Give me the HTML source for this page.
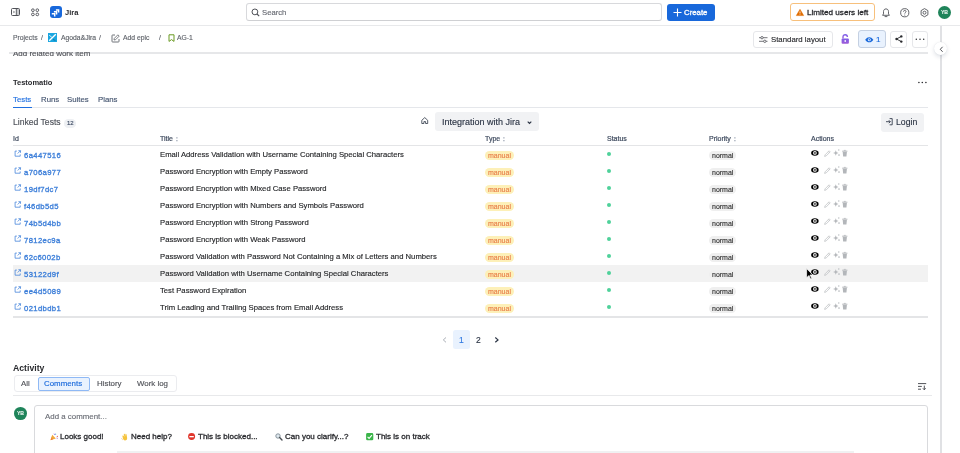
<!DOCTYPE html>
<html><head><meta charset="utf-8">
<style>
*{box-sizing:border-box;margin:0;padding:0}
html,body{width:960px;height:453px;overflow:hidden;background:#fff;font-family:"Liberation Sans",sans-serif;color:#292a2e}
.a{position:absolute;white-space:nowrap}
.t{position:absolute;white-space:nowrap;line-height:1;will-change:transform}
svg{position:absolute;display:block;overflow:visible}
</style></head><body>
<div class="a" style="left:0px;top:25px;width:960px;height:1px;background:#e8e9eb"></div>
<svg style="left:11px;top:8px" width="9" height="8" viewBox="0 0 9 8"><rect x=".5" y=".5" width="8" height="7" rx="1" fill="none" stroke="#505258" stroke-width="1"/><rect x="5.3" y="1" width="2.7" height="6" fill="#c9cacd"/><path d="M5.3 .5v7" stroke="#505258" stroke-width=".9"/><path d="M2.4 2.9l1 1.1-1 1.1" fill="none" stroke="#505258" stroke-width=".8"/></svg>
<svg style="left:30.5px;top:8px" width="9" height="9" viewBox="0 0 9 9"><circle cx="1.9" cy="2.2" r="1.35" fill="none" stroke="#505258" stroke-width=".95"/><circle cx="1.9" cy="6.4" r="1.35" fill="none" stroke="#505258" stroke-width=".95"/><circle cx="6.3" cy="2.2" r="1.35" fill="none" stroke="#505258" stroke-width=".95"/><circle cx="6.3" cy="6.4" r="1.35" fill="none" stroke="#505258" stroke-width=".95"/></svg>
<div class="a" style="left:49.9px;top:6.1px;width:12.1px;height:12px;border-radius:3px;background:#1868db"></div>
<svg style="left:49px;top:5px" width="14" height="14" viewBox="0 0 14 14"><g fill="none" stroke="#fff" stroke-width="1.45" stroke-linejoin="miter"><path d="M6.9 4.9H9.6V7.5"/><path d="M4.9 6.8H7.6V9.4"/><path d="M2.8 8.8H5.7V11.6"/></g></svg>
<div class="t" style="left:65.10px;top:9.00px;font-size:7.5px;font-weight:bold;color:#292a2e;">Jira</div>
<div class="a" style="left:246px;top:3.2px;width:416.2px;height:17.4px;border:1px solid #d8d9dc;border-bottom-color:#cfd0d3;border-radius:3px"></div>
<svg style="left:250.5px;top:7.5px" width="9" height="9" viewBox="0 0 9 9"><circle cx="3.9" cy="3.9" r="2.9" fill="none" stroke="#505258" stroke-width="1"/><path d="M6 6l2.2 2.2" stroke="#505258" stroke-width="1.1"/></svg>
<div class="t" style="left:262.30px;top:9.00px;font-size:7.7px;-webkit-text-stroke:.14px #676a72;color:#676a72;">Search</div>
<div class="a" style="left:666.5px;top:4px;width:48.5px;height:16.5px;border-radius:3px;background:#1868db"></div>
<svg style="left:673px;top:8px" width="9" height="9" viewBox="0 0 9 9"><path d="M4.5 .5v8M.5 4.5h8" stroke="#fff" stroke-width="1.1"/></svg>
<div class="t" style="left:684.40px;top:9.00px;font-size:7.8px;color:#fff;-webkit-text-stroke:.3px #fff">Create</div>
<div class="a" style="left:789.5px;top:3px;width:85px;height:17.5px;border:1px solid #f7c07c;border-radius:3px"></div>
<svg style="left:795.5px;top:8.8px" width="8" height="7" viewBox="0 0 8 7"><path d="M4 .3L7.7 6.6H.3z" fill="#e06c00" stroke="#e06c00" stroke-width=".5" stroke-linejoin="round"/><path d="M4 2.4v2.1" stroke="#fff" stroke-width=".8"/><circle cx="4" cy="5.5" r=".42" fill="#fff"/></svg>
<div class="t" style="left:806.70px;top:9.00px;font-size:8.1px;color:#292a2e;-webkit-text-stroke:.3px #292a2e">Limited users left</div>
<svg style="left:881.5px;top:7.5px" width="8" height="9.5" viewBox="0 0 8 9.5"><path d="M4 .9C2.5.9 1.5 2 1.5 3.6v2.3L.6 7.3h6.8l-.9-1.4V3.6C6.5 2 5.5.9 4 .9z" fill="none" stroke="#505258" stroke-width=".9" stroke-linejoin="round"/><path d="M3 8.6h2" stroke="#505258" stroke-width=".9" stroke-linecap="round"/></svg>
<svg style="left:900px;top:7.6px" width="9.5" height="9.5" viewBox="0 0 9.5 9.5"><circle cx="4.75" cy="4.75" r="4.1" fill="none" stroke="#505258" stroke-width=".9"/><path d="M3.5 3.7c0-.8.5-1.3 1.25-1.3S6 2.9 6 3.6c0 1-1.25 1-1.25 2" fill="none" stroke="#505258" stroke-width=".85"/><circle cx="4.75" cy="7.1" r=".5" fill="#505258"/></svg>
<svg style="left:919.6px;top:7.6px" width="9" height="9.4" viewBox="0 0 9 9.4"><path d="M4.5 .6l3.4 2v4.2l-3.4 2-3.4-2V2.6z" fill="none" stroke="#505258" stroke-width=".9" stroke-linejoin="round"/><circle cx="4.5" cy="4.7" r="1.5" fill="none" stroke="#505258" stroke-width=".9"/></svg>
<div class="a" style="left:937.8px;top:5.8px;width:13px;height:13px;border-radius:50%;background:#1f845a"></div>
<div class="t" style="left:937.8px;top:9.6px;width:13px;text-align:center;font-size:5.2px;font-weight:bold;color:#fff;letter-spacing:-.1px">YB</div>
<div class="a" style="left:940.4px;top:26px;width:1.5px;height:427px;background:#e0e1e4"></div>
<div class="a" style="left:9px;top:52.3px;width:919px;height:1.6px;background:#e6e7e9"></div>
<div class="a" style="left:0;top:51.5px;width:928px;height:6px;overflow:hidden">
<div class="t" style="left:12.70px;top:-1.50px;font-size:8px;-webkit-text-stroke:.14px #505258;color:#505258;">Add related work item</div>
</div>
<div class="t" style="left:12.80px;top:35.00px;font-size:6.8px;-webkit-text-stroke:.14px #5f636a;color:#5f636a;">Projects</div>
<div class="t" style="left:40.60px;top:35.00px;font-size:6.8px;-webkit-text-stroke:.14px #5f636a;color:#5f636a;">/</div>
<div class="a" style="left:48px;top:33.4px;width:8.9px;height:8.9px;background:#1aa6e0"></div>
<svg style="left:48px;top:33.4px" width="9" height="9" viewBox="0 0 9 9"><path d="M1.2 7.8L7.8 1.2" stroke="#fff" stroke-width="1.3"/><path d="M1.2 2.2l2.6 2" stroke="#d9f1fb" stroke-width="1"/><path d="M5 6.5l2.4 1" stroke="#0b6e9a" stroke-width=".8"/></svg>
<div class="t" style="left:60.95px;top:35.00px;font-size:6.8px;-webkit-text-stroke:.14px #5f636a;color:#5f636a;">Agoda&amp;Jira</div>
<div class="t" style="left:98.90px;top:35.00px;font-size:6.8px;-webkit-text-stroke:.14px #5f636a;color:#5f636a;">/</div>
<svg style="left:111px;top:33.5px" width="9" height="8.5" viewBox="0 0 9 8.5"><path d="M4 1H1.6C1.2 1 1 1.2 1 1.6v5.8c0 .4.2.6.6.6h5.8c.4 0 .6-.2.6-.6V5" fill="none" stroke="#5f636a" stroke-width=".9"/><path d="M6.9.8l1.3 1.3L4.6 5.7l-1.6.3.3-1.6z" fill="none" stroke="#5f636a" stroke-width=".8" stroke-linejoin="round"/></svg>
<div class="t" style="left:122.60px;top:35.00px;font-size:6.8px;-webkit-text-stroke:.14px #5f636a;color:#5f636a;">Add epic</div>
<div class="t" style="left:159.10px;top:35.00px;font-size:6.8px;-webkit-text-stroke:.14px #5f636a;color:#5f636a;">/</div>
<svg style="left:167.5px;top:34px" width="7" height="8" viewBox="0 0 7 8"><path d="M1 .8h5v6.6L3.5 5.6 1 7.4z" fill="none" stroke="#6a9a23" stroke-width="1" stroke-linejoin="round"/></svg>
<div class="t" style="left:177.40px;top:35.00px;font-size:6.8px;-webkit-text-stroke:.14px #5f636a;color:#5f636a;">AG-1</div>
<div class="a" style="left:752.6px;top:30.6px;width:80px;height:17.1px;border:1px solid #e6e7ea;border-radius:3px"></div>
<svg style="left:758.9px;top:36px" width="9" height="7" viewBox="0 0 9 7"><path d="M0 1.7h8.5M0 5.3h8.5" stroke="#505258" stroke-width=".8"/><circle cx="3" cy="1.7" r="1.2" fill="#fff" stroke="#505258" stroke-width=".8"/><circle cx="5.8" cy="5.3" r="1.2" fill="#fff" stroke="#505258" stroke-width=".8"/></svg>
<div class="t" style="left:770.50px;top:36.00px;font-size:7.8px;-webkit-text-stroke:.14px #292a2e;color:#292a2e;">Standard layout</div>
<svg style="left:840.7px;top:34px" width="8.5" height="10" viewBox="0 0 8.5 10"><defs><linearGradient id="lg" x1="0" y1="0" x2="0" y2="1"><stop offset="0" stop-color="#7d5fe8"/><stop offset="1" stop-color="#a05cd8"/></linearGradient></defs><path d="M2 4.6V3C2 1.6 3 .7 4.2.7S6.4 1.6 6.4 3" fill="none" stroke="url(#lg)" stroke-width="1.4"/><rect x=".6" y="4.4" width="7.3" height="5.4" rx="1" fill="url(#lg)"/><rect x="3.5" y="6.2" width="1.5" height="1.6" fill="#fff"/></svg>
<div class="a" style="left:858.1px;top:30.3px;width:28.2px;height:17.3px;border:1px solid #c4d0e2;border-radius:3px;background:#e9f2fe"></div>
<svg style="left:864.7px;top:36.5px" width="8.5" height="5.5" viewBox="0 0 8.5 5.5"><path d="M.2 2.75C1.4 1 2.7.2 4.25.2S7.1 1 8.3 2.75C7.1 4.5 5.8 5.3 4.25 5.3S1.4 4.5.2 2.75z" fill="#1868db"/><circle cx="4.25" cy="2.75" r="1.5" fill="#e9f2fe"/><circle cx="4.25" cy="2.75" r=".75" fill="#1868db"/></svg>
<div class="t" style="left:876.00px;top:36.00px;font-size:8.0px;-webkit-text-stroke:.14px #1868db;color:#1868db;">1</div>
<div class="a" style="left:890.2px;top:30.5px;width:16.5px;height:17.1px;border:1px solid #e6e7ea;border-radius:3px"></div>
<svg style="left:894.5px;top:35px" width="8" height="8" viewBox="0 0 8 8"><circle cx="6.3" cy="1.4" r="1.2" fill="#292a2e"/><circle cx="1.5" cy="4" r="1.2" fill="#292a2e"/><circle cx="6.3" cy="6.6" r="1.2" fill="#292a2e"/><path d="M6.3 1.4L1.5 4l4.8 2.6" fill="none" stroke="#292a2e" stroke-width=".9"/></svg>
<div class="a" style="left:911.6px;top:30.5px;width:16.8px;height:17.1px;border:1px solid #e6e7ea;border-radius:3px"></div>
<svg style="left:914.5px;top:38px" width="10" height="2.5" viewBox="0 0 10 2.5"><circle cx="1.3" cy="1.2" r=".75" fill="#292a2e"/><circle cx="5" cy="1.2" r=".75" fill="#292a2e"/><circle cx="8.7" cy="1.2" r=".75" fill="#292a2e"/></svg>
<div class="a" style="left:934px;top:41.8px;width:13.4px;height:13.4px;border-radius:50%;background:#fff;box-shadow:0 2px 4px rgba(9,30,66,.13),0 0 1px rgba(9,30,66,.12)"></div>
<svg style="left:938.5px;top:45.5px" width="5" height="7" viewBox="0 0 5 7"><path d="M3.6 .8L1.3 3.3 3.6 5.8" fill="none" stroke="#505258" stroke-width="1"/></svg>
<div class="t" style="left:13.45px;top:79.00px;font-size:7.5px;font-weight:bold;color:#292a2e;">Testomatio</div>
<svg style="left:916.5px;top:80.6px" width="11" height="3" viewBox="0 0 11 3"><circle cx="1.9" cy="1.5" r=".8" fill="#292a2e"/><circle cx="5.3" cy="1.5" r=".8" fill="#292a2e"/><circle cx="8.9" cy="1.5" r=".8" fill="#292a2e"/></svg>
<div class="t" style="left:13.10px;top:96.00px;font-size:7.8px;-webkit-text-stroke:.14px #1f6fe0;color:#1f6fe0;">Tests</div>
<div class="t" style="left:40.70px;top:96.00px;font-size:7.8px;-webkit-text-stroke:.14px #44546f;color:#44546f;">Runs</div>
<div class="t" style="left:67.00px;top:96.00px;font-size:7.8px;-webkit-text-stroke:.14px #44546f;color:#44546f;">Suites</div>
<div class="t" style="left:97.70px;top:96.00px;font-size:7.8px;-webkit-text-stroke:.14px #44546f;color:#44546f;">Plans</div>
<div class="a" style="left:13px;top:107px;width:915px;height:1px;background:#e5e7eb"></div>
<div class="a" style="left:13.4px;top:106.5px;width:18.8px;height:1.6px;background:#1f6fe0"></div>
<div class="t" style="left:12.90px;top:118.00px;font-size:8.6px;-webkit-text-stroke:.14px #4b4f57;color:#4b4f57;">Linked Tests</div>
<div class="a" style="left:63.8px;top:119px;width:12px;height:8.5px;border-radius:4.25px;background:#eef0f3"></div>
<div class="t" style="left:66.70px;top:120.00px;font-size:6px;-webkit-text-stroke:.14px #3d4a63;color:#3d4a63;">12</div>
<svg style="left:421px;top:117.4px" width="8" height="7" viewBox="0 0 8 7"><path d="M.8 3.3L3.75.6l2.95 2.7V6.5H4.6V4.6H2.9v1.9H.8z" fill="none" stroke="#2b3444" stroke-width=".8" stroke-linejoin="round"/></svg>
<div class="a" style="left:435.3px;top:112.4px;width:103.3px;height:19px;border-radius:3px;background:#f1f2f4"></div>
<div class="t" style="left:441.50px;top:118.00px;font-size:9px;-webkit-text-stroke:.14px #2b3444;color:#2b3444;">Integration with Jira</div>
<svg style="left:526.5px;top:121px" width="5" height="3.5" viewBox="0 0 5 3.5"><path d="M.7.7l1.8 1.8L4.3.7" fill="none" stroke="#2b3444" stroke-width="1.1"/></svg>
<div class="a" style="left:881.2px;top:112.9px;width:42.6px;height:18.8px;border-radius:3px;background:#f1f2f4"></div>
<svg style="left:886px;top:118.3px" width="7" height="7.5" viewBox="0 0 7 7.5"><path d="M3.6.6H6.2v6.2H3.6" fill="none" stroke="#2b3444" stroke-width=".85"/><path d="M0 3.7h4.3M2.8 2.2l1.5 1.5-1.5 1.5" fill="none" stroke="#2b3444" stroke-width=".85"/></svg>
<div class="t" style="left:896.00px;top:118.00px;font-size:8.7px;-webkit-text-stroke:.14px #2b3444;color:#2b3444;">Login</div>
<div class="t" style="left:12.90px;top:135.00px;font-size:7.0px;color:#3e4a5e;-webkit-text-stroke:.2px #3e4a5e">Id</div>
<div class="t" style="left:159.70px;top:135.00px;font-size:7.0px;color:#3e4a5e;-webkit-text-stroke:.2px #3e4a5e">Title</div>
<div class="t" style="left:485.10px;top:135.00px;font-size:7.0px;color:#3e4a5e;-webkit-text-stroke:.2px #3e4a5e">Type</div>
<div class="t" style="left:607.00px;top:135.00px;font-size:7.0px;color:#3e4a5e;-webkit-text-stroke:.2px #3e4a5e">Status</div>
<div class="t" style="left:708.70px;top:135.00px;font-size:7.0px;color:#3e4a5e;-webkit-text-stroke:.2px #3e4a5e">Priority</div>
<div class="t" style="left:810.50px;top:135.00px;font-size:7.0px;color:#3e4a5e;-webkit-text-stroke:.2px #3e4a5e">Actions</div>
<svg style="left:176.2px;top:137.1px" width="2" height="4.5" viewBox="0 0 2 4.5"><rect x=".3" y=".2" width="1.2" height="1.3" fill="#9aa3b2"/><rect x=".3" y="3" width="1.2" height="1.3" fill="#9aa3b2"/></svg>
<svg style="left:502.6px;top:137.1px" width="2" height="4.5" viewBox="0 0 2 4.5"><rect x=".3" y=".2" width="1.2" height="1.3" fill="#9aa3b2"/><rect x=".3" y="3" width="1.2" height="1.3" fill="#9aa3b2"/></svg>
<svg style="left:733.9px;top:137.1px" width="2" height="4.5" viewBox="0 0 2 4.5"><rect x=".3" y=".2" width="1.2" height="1.3" fill="#9aa3b2"/><rect x=".3" y="3" width="1.2" height="1.3" fill="#9aa3b2"/></svg>
<div class="a" style="left:13px;top:144.5px;width:915px;height:1.5px;background:#e4e5e7"></div>
<svg style="left:13.8px;top:149.8px" width="7.5" height="7" viewBox="0 0 7.5 7"><path d="M2.9 1.1H1.1v5.1h5.1V4.4" fill="none" stroke="#3d7fd9" stroke-width=".75"/><path d="M4.4.7h2.1v2.1M6.5.7L3.7 3.5" fill="none" stroke="#3d7fd9" stroke-width=".75"/></svg>
<div class="t" style="left:23.70px;top:152.00px;font-size:7.7px;color:#3d7fd9;letter-spacing:.35px;-webkit-text-stroke:.32px #3d7fd9">6a447516</div>
<div class="t" style="left:159.70px;top:151.00px;font-size:7.7px;-webkit-text-stroke:.14px #1f2023;color:#1f2023;">Email Address Validation with Username Containing Special Characters</div>
<div class="a" style="left:485.1px;top:150.7px;width:29.2px;height:9.2px;border-radius:4.6px;background:#fdf0b8"></div>
<div class="t" style="left:487.90px;top:152.00px;font-size:7px;-webkit-text-stroke:.14px #e8804a;color:#e8804a;">manual</div>
<div class="a" style="left:607.3px;top:152.1px;width:4px;height:4px;border-radius:50%;background:#4fd19a"></div>
<div class="a" style="left:709.4px;top:151.1px;width:26.4px;height:8.8px;border-radius:4.4px;background:#efefef"></div>
<div class="t" style="left:711.60px;top:152.00px;font-size:7px;-webkit-text-stroke:.14px #333;color:#333;">normal</div>
<svg style="left:810.8px;top:150.2px" width="8" height="6" viewBox="0 0 8 6"><ellipse cx="3.9" cy="2.9" rx="3.75" ry="2.75" fill="#000"/><circle cx="3.9" cy="2.9" r="1.85" fill="#fff"/><circle cx="3.9" cy="2.9" r="1.05" fill="#555"/><circle cx="3.9" cy="2.9" r=".45" fill="#999"/></svg>
<svg style="left:824.3px;top:149.6px" width="7" height="7" viewBox="0 0 7 7"><path d="M5.1.8l1.1 1.1L2.2 5.9l-1.6.5.5-1.6z" fill="none" stroke="#c4c6c9" stroke-width=".85" stroke-linejoin="round"/><path d="M4.3 1.6l1.1 1.1" stroke="#c4c6c9" stroke-width=".7"/></svg>
<svg style="left:832.6px;top:149.4px" width="7" height="7" viewBox="0 0 7 7"><path d="M2.8 1.3l.75 1.95 1.95.75-1.95.75-.75 1.95-.75-1.95L.1 4l1.95-.75z" fill="#b3b6ba"/><circle cx="5.8" cy="1" r=".65" fill="#b3b6ba"/><circle cx="6" cy="6.1" r=".8" fill="#b3b6ba"/></svg>
<svg style="left:842px;top:149.6px" width="5.6" height="6.6" viewBox="0 0 5.6 6.6"><path d="M.2 1.2h5.2" stroke="#b3b6ba" stroke-width="1"/><path d="M1.8.4h2" stroke="#b3b6ba" stroke-width=".8"/><path d="M.7 1.9h4.2l-.45 4.5H1.15z" fill="#b3b6ba"/></svg>
<svg style="left:13.8px;top:166.8px" width="7.5" height="7" viewBox="0 0 7.5 7"><path d="M2.9 1.1H1.1v5.1h5.1V4.4" fill="none" stroke="#3d7fd9" stroke-width=".75"/><path d="M4.4.7h2.1v2.1M6.5.7L3.7 3.5" fill="none" stroke="#3d7fd9" stroke-width=".75"/></svg>
<div class="t" style="left:23.70px;top:169.00px;font-size:7.7px;color:#3d7fd9;letter-spacing:.35px;-webkit-text-stroke:.32px #3d7fd9">a706a977</div>
<div class="t" style="left:159.70px;top:168.00px;font-size:7.7px;-webkit-text-stroke:.14px #1f2023;color:#1f2023;">Password Encryption with Empty Password</div>
<div class="a" style="left:485.1px;top:167.7px;width:29.2px;height:9.2px;border-radius:4.6px;background:#fdf0b8"></div>
<div class="t" style="left:487.90px;top:169.00px;font-size:7px;-webkit-text-stroke:.14px #e8804a;color:#e8804a;">manual</div>
<div class="a" style="left:607.3px;top:169.1px;width:4px;height:4px;border-radius:50%;background:#4fd19a"></div>
<div class="a" style="left:709.4px;top:168.1px;width:26.4px;height:8.8px;border-radius:4.4px;background:#efefef"></div>
<div class="t" style="left:711.60px;top:169.00px;font-size:7px;-webkit-text-stroke:.14px #333;color:#333;">normal</div>
<svg style="left:810.8px;top:167.2px" width="8" height="6" viewBox="0 0 8 6"><ellipse cx="3.9" cy="2.9" rx="3.75" ry="2.75" fill="#000"/><circle cx="3.9" cy="2.9" r="1.85" fill="#fff"/><circle cx="3.9" cy="2.9" r="1.05" fill="#555"/><circle cx="3.9" cy="2.9" r=".45" fill="#999"/></svg>
<svg style="left:824.3px;top:166.6px" width="7" height="7" viewBox="0 0 7 7"><path d="M5.1.8l1.1 1.1L2.2 5.9l-1.6.5.5-1.6z" fill="none" stroke="#c4c6c9" stroke-width=".85" stroke-linejoin="round"/><path d="M4.3 1.6l1.1 1.1" stroke="#c4c6c9" stroke-width=".7"/></svg>
<svg style="left:832.6px;top:166.4px" width="7" height="7" viewBox="0 0 7 7"><path d="M2.8 1.3l.75 1.95 1.95.75-1.95.75-.75 1.95-.75-1.95L.1 4l1.95-.75z" fill="#b3b6ba"/><circle cx="5.8" cy="1" r=".65" fill="#b3b6ba"/><circle cx="6" cy="6.1" r=".8" fill="#b3b6ba"/></svg>
<svg style="left:842px;top:166.6px" width="5.6" height="6.6" viewBox="0 0 5.6 6.6"><path d="M.2 1.2h5.2" stroke="#b3b6ba" stroke-width="1"/><path d="M1.8.4h2" stroke="#b3b6ba" stroke-width=".8"/><path d="M.7 1.9h4.2l-.45 4.5H1.15z" fill="#b3b6ba"/></svg>
<svg style="left:13.8px;top:183.8px" width="7.5" height="7" viewBox="0 0 7.5 7"><path d="M2.9 1.1H1.1v5.1h5.1V4.4" fill="none" stroke="#3d7fd9" stroke-width=".75"/><path d="M4.4.7h2.1v2.1M6.5.7L3.7 3.5" fill="none" stroke="#3d7fd9" stroke-width=".75"/></svg>
<div class="t" style="left:23.70px;top:186.00px;font-size:7.7px;color:#3d7fd9;letter-spacing:.35px;-webkit-text-stroke:.32px #3d7fd9">19df7dc7</div>
<div class="t" style="left:159.70px;top:185.00px;font-size:7.7px;-webkit-text-stroke:.14px #1f2023;color:#1f2023;">Password Encryption with Mixed Case Password</div>
<div class="a" style="left:485.1px;top:184.7px;width:29.2px;height:9.2px;border-radius:4.6px;background:#fdf0b8"></div>
<div class="t" style="left:487.90px;top:186.00px;font-size:7px;-webkit-text-stroke:.14px #e8804a;color:#e8804a;">manual</div>
<div class="a" style="left:607.3px;top:186.1px;width:4px;height:4px;border-radius:50%;background:#4fd19a"></div>
<div class="a" style="left:709.4px;top:185.1px;width:26.4px;height:8.8px;border-radius:4.4px;background:#efefef"></div>
<div class="t" style="left:711.60px;top:186.00px;font-size:7px;-webkit-text-stroke:.14px #333;color:#333;">normal</div>
<svg style="left:810.8px;top:184.2px" width="8" height="6" viewBox="0 0 8 6"><ellipse cx="3.9" cy="2.9" rx="3.75" ry="2.75" fill="#000"/><circle cx="3.9" cy="2.9" r="1.85" fill="#fff"/><circle cx="3.9" cy="2.9" r="1.05" fill="#555"/><circle cx="3.9" cy="2.9" r=".45" fill="#999"/></svg>
<svg style="left:824.3px;top:183.6px" width="7" height="7" viewBox="0 0 7 7"><path d="M5.1.8l1.1 1.1L2.2 5.9l-1.6.5.5-1.6z" fill="none" stroke="#c4c6c9" stroke-width=".85" stroke-linejoin="round"/><path d="M4.3 1.6l1.1 1.1" stroke="#c4c6c9" stroke-width=".7"/></svg>
<svg style="left:832.6px;top:183.4px" width="7" height="7" viewBox="0 0 7 7"><path d="M2.8 1.3l.75 1.95 1.95.75-1.95.75-.75 1.95-.75-1.95L.1 4l1.95-.75z" fill="#b3b6ba"/><circle cx="5.8" cy="1" r=".65" fill="#b3b6ba"/><circle cx="6" cy="6.1" r=".8" fill="#b3b6ba"/></svg>
<svg style="left:842px;top:183.6px" width="5.6" height="6.6" viewBox="0 0 5.6 6.6"><path d="M.2 1.2h5.2" stroke="#b3b6ba" stroke-width="1"/><path d="M1.8.4h2" stroke="#b3b6ba" stroke-width=".8"/><path d="M.7 1.9h4.2l-.45 4.5H1.15z" fill="#b3b6ba"/></svg>
<svg style="left:13.8px;top:200.8px" width="7.5" height="7" viewBox="0 0 7.5 7"><path d="M2.9 1.1H1.1v5.1h5.1V4.4" fill="none" stroke="#3d7fd9" stroke-width=".75"/><path d="M4.4.7h2.1v2.1M6.5.7L3.7 3.5" fill="none" stroke="#3d7fd9" stroke-width=".75"/></svg>
<div class="t" style="left:23.70px;top:203.00px;font-size:7.7px;color:#3d7fd9;letter-spacing:.35px;-webkit-text-stroke:.32px #3d7fd9">f46db5d5</div>
<div class="t" style="left:159.70px;top:202.00px;font-size:7.7px;-webkit-text-stroke:.14px #1f2023;color:#1f2023;">Password Encryption with Numbers and Symbols Password</div>
<div class="a" style="left:485.1px;top:201.7px;width:29.2px;height:9.2px;border-radius:4.6px;background:#fdf0b8"></div>
<div class="t" style="left:487.90px;top:203.00px;font-size:7px;-webkit-text-stroke:.14px #e8804a;color:#e8804a;">manual</div>
<div class="a" style="left:607.3px;top:203.1px;width:4px;height:4px;border-radius:50%;background:#4fd19a"></div>
<div class="a" style="left:709.4px;top:202.1px;width:26.4px;height:8.8px;border-radius:4.4px;background:#efefef"></div>
<div class="t" style="left:711.60px;top:203.00px;font-size:7px;-webkit-text-stroke:.14px #333;color:#333;">normal</div>
<svg style="left:810.8px;top:201.2px" width="8" height="6" viewBox="0 0 8 6"><ellipse cx="3.9" cy="2.9" rx="3.75" ry="2.75" fill="#000"/><circle cx="3.9" cy="2.9" r="1.85" fill="#fff"/><circle cx="3.9" cy="2.9" r="1.05" fill="#555"/><circle cx="3.9" cy="2.9" r=".45" fill="#999"/></svg>
<svg style="left:824.3px;top:200.6px" width="7" height="7" viewBox="0 0 7 7"><path d="M5.1.8l1.1 1.1L2.2 5.9l-1.6.5.5-1.6z" fill="none" stroke="#c4c6c9" stroke-width=".85" stroke-linejoin="round"/><path d="M4.3 1.6l1.1 1.1" stroke="#c4c6c9" stroke-width=".7"/></svg>
<svg style="left:832.6px;top:200.4px" width="7" height="7" viewBox="0 0 7 7"><path d="M2.8 1.3l.75 1.95 1.95.75-1.95.75-.75 1.95-.75-1.95L.1 4l1.95-.75z" fill="#b3b6ba"/><circle cx="5.8" cy="1" r=".65" fill="#b3b6ba"/><circle cx="6" cy="6.1" r=".8" fill="#b3b6ba"/></svg>
<svg style="left:842px;top:200.6px" width="5.6" height="6.6" viewBox="0 0 5.6 6.6"><path d="M.2 1.2h5.2" stroke="#b3b6ba" stroke-width="1"/><path d="M1.8.4h2" stroke="#b3b6ba" stroke-width=".8"/><path d="M.7 1.9h4.2l-.45 4.5H1.15z" fill="#b3b6ba"/></svg>
<svg style="left:13.8px;top:217.8px" width="7.5" height="7" viewBox="0 0 7.5 7"><path d="M2.9 1.1H1.1v5.1h5.1V4.4" fill="none" stroke="#3d7fd9" stroke-width=".75"/><path d="M4.4.7h2.1v2.1M6.5.7L3.7 3.5" fill="none" stroke="#3d7fd9" stroke-width=".75"/></svg>
<div class="t" style="left:23.70px;top:220.00px;font-size:7.7px;color:#3d7fd9;letter-spacing:.35px;-webkit-text-stroke:.32px #3d7fd9">74b5d4bb</div>
<div class="t" style="left:159.70px;top:219.00px;font-size:7.7px;-webkit-text-stroke:.14px #1f2023;color:#1f2023;">Password Encryption with Strong Password</div>
<div class="a" style="left:485.1px;top:218.7px;width:29.2px;height:9.2px;border-radius:4.6px;background:#fdf0b8"></div>
<div class="t" style="left:487.90px;top:220.00px;font-size:7px;-webkit-text-stroke:.14px #e8804a;color:#e8804a;">manual</div>
<div class="a" style="left:607.3px;top:220.1px;width:4px;height:4px;border-radius:50%;background:#4fd19a"></div>
<div class="a" style="left:709.4px;top:219.1px;width:26.4px;height:8.8px;border-radius:4.4px;background:#efefef"></div>
<div class="t" style="left:711.60px;top:220.00px;font-size:7px;-webkit-text-stroke:.14px #333;color:#333;">normal</div>
<svg style="left:810.8px;top:218.2px" width="8" height="6" viewBox="0 0 8 6"><ellipse cx="3.9" cy="2.9" rx="3.75" ry="2.75" fill="#000"/><circle cx="3.9" cy="2.9" r="1.85" fill="#fff"/><circle cx="3.9" cy="2.9" r="1.05" fill="#555"/><circle cx="3.9" cy="2.9" r=".45" fill="#999"/></svg>
<svg style="left:824.3px;top:217.6px" width="7" height="7" viewBox="0 0 7 7"><path d="M5.1.8l1.1 1.1L2.2 5.9l-1.6.5.5-1.6z" fill="none" stroke="#c4c6c9" stroke-width=".85" stroke-linejoin="round"/><path d="M4.3 1.6l1.1 1.1" stroke="#c4c6c9" stroke-width=".7"/></svg>
<svg style="left:832.6px;top:217.4px" width="7" height="7" viewBox="0 0 7 7"><path d="M2.8 1.3l.75 1.95 1.95.75-1.95.75-.75 1.95-.75-1.95L.1 4l1.95-.75z" fill="#b3b6ba"/><circle cx="5.8" cy="1" r=".65" fill="#b3b6ba"/><circle cx="6" cy="6.1" r=".8" fill="#b3b6ba"/></svg>
<svg style="left:842px;top:217.6px" width="5.6" height="6.6" viewBox="0 0 5.6 6.6"><path d="M.2 1.2h5.2" stroke="#b3b6ba" stroke-width="1"/><path d="M1.8.4h2" stroke="#b3b6ba" stroke-width=".8"/><path d="M.7 1.9h4.2l-.45 4.5H1.15z" fill="#b3b6ba"/></svg>
<svg style="left:13.8px;top:234.8px" width="7.5" height="7" viewBox="0 0 7.5 7"><path d="M2.9 1.1H1.1v5.1h5.1V4.4" fill="none" stroke="#3d7fd9" stroke-width=".75"/><path d="M4.4.7h2.1v2.1M6.5.7L3.7 3.5" fill="none" stroke="#3d7fd9" stroke-width=".75"/></svg>
<div class="t" style="left:23.70px;top:237.00px;font-size:7.7px;color:#3d7fd9;letter-spacing:.35px;-webkit-text-stroke:.32px #3d7fd9">7812ec9a</div>
<div class="t" style="left:159.70px;top:236.00px;font-size:7.7px;-webkit-text-stroke:.14px #1f2023;color:#1f2023;">Password Encryption with Weak Password</div>
<div class="a" style="left:485.1px;top:235.7px;width:29.2px;height:9.2px;border-radius:4.6px;background:#fdf0b8"></div>
<div class="t" style="left:487.90px;top:237.00px;font-size:7px;-webkit-text-stroke:.14px #e8804a;color:#e8804a;">manual</div>
<div class="a" style="left:607.3px;top:237.1px;width:4px;height:4px;border-radius:50%;background:#4fd19a"></div>
<div class="a" style="left:709.4px;top:236.1px;width:26.4px;height:8.8px;border-radius:4.4px;background:#efefef"></div>
<div class="t" style="left:711.60px;top:237.00px;font-size:7px;-webkit-text-stroke:.14px #333;color:#333;">normal</div>
<svg style="left:810.8px;top:235.2px" width="8" height="6" viewBox="0 0 8 6"><ellipse cx="3.9" cy="2.9" rx="3.75" ry="2.75" fill="#000"/><circle cx="3.9" cy="2.9" r="1.85" fill="#fff"/><circle cx="3.9" cy="2.9" r="1.05" fill="#555"/><circle cx="3.9" cy="2.9" r=".45" fill="#999"/></svg>
<svg style="left:824.3px;top:234.6px" width="7" height="7" viewBox="0 0 7 7"><path d="M5.1.8l1.1 1.1L2.2 5.9l-1.6.5.5-1.6z" fill="none" stroke="#c4c6c9" stroke-width=".85" stroke-linejoin="round"/><path d="M4.3 1.6l1.1 1.1" stroke="#c4c6c9" stroke-width=".7"/></svg>
<svg style="left:832.6px;top:234.4px" width="7" height="7" viewBox="0 0 7 7"><path d="M2.8 1.3l.75 1.95 1.95.75-1.95.75-.75 1.95-.75-1.95L.1 4l1.95-.75z" fill="#b3b6ba"/><circle cx="5.8" cy="1" r=".65" fill="#b3b6ba"/><circle cx="6" cy="6.1" r=".8" fill="#b3b6ba"/></svg>
<svg style="left:842px;top:234.6px" width="5.6" height="6.6" viewBox="0 0 5.6 6.6"><path d="M.2 1.2h5.2" stroke="#b3b6ba" stroke-width="1"/><path d="M1.8.4h2" stroke="#b3b6ba" stroke-width=".8"/><path d="M.7 1.9h4.2l-.45 4.5H1.15z" fill="#b3b6ba"/></svg>
<svg style="left:13.8px;top:251.8px" width="7.5" height="7" viewBox="0 0 7.5 7"><path d="M2.9 1.1H1.1v5.1h5.1V4.4" fill="none" stroke="#3d7fd9" stroke-width=".75"/><path d="M4.4.7h2.1v2.1M6.5.7L3.7 3.5" fill="none" stroke="#3d7fd9" stroke-width=".75"/></svg>
<div class="t" style="left:23.70px;top:254.00px;font-size:7.7px;color:#3d7fd9;letter-spacing:.35px;-webkit-text-stroke:.32px #3d7fd9">62c6002b</div>
<div class="t" style="left:159.70px;top:253.00px;font-size:7.7px;-webkit-text-stroke:.14px #1f2023;color:#1f2023;">Password Validation with Password Not Containing a Mix of Letters and Numbers</div>
<div class="a" style="left:485.1px;top:252.7px;width:29.2px;height:9.2px;border-radius:4.6px;background:#fdf0b8"></div>
<div class="t" style="left:487.90px;top:254.00px;font-size:7px;-webkit-text-stroke:.14px #e8804a;color:#e8804a;">manual</div>
<div class="a" style="left:607.3px;top:254.1px;width:4px;height:4px;border-radius:50%;background:#4fd19a"></div>
<div class="a" style="left:709.4px;top:253.1px;width:26.4px;height:8.8px;border-radius:4.4px;background:#efefef"></div>
<div class="t" style="left:711.60px;top:254.00px;font-size:7px;-webkit-text-stroke:.14px #333;color:#333;">normal</div>
<svg style="left:810.8px;top:252.2px" width="8" height="6" viewBox="0 0 8 6"><ellipse cx="3.9" cy="2.9" rx="3.75" ry="2.75" fill="#000"/><circle cx="3.9" cy="2.9" r="1.85" fill="#fff"/><circle cx="3.9" cy="2.9" r="1.05" fill="#555"/><circle cx="3.9" cy="2.9" r=".45" fill="#999"/></svg>
<svg style="left:824.3px;top:251.6px" width="7" height="7" viewBox="0 0 7 7"><path d="M5.1.8l1.1 1.1L2.2 5.9l-1.6.5.5-1.6z" fill="none" stroke="#c4c6c9" stroke-width=".85" stroke-linejoin="round"/><path d="M4.3 1.6l1.1 1.1" stroke="#c4c6c9" stroke-width=".7"/></svg>
<svg style="left:832.6px;top:251.4px" width="7" height="7" viewBox="0 0 7 7"><path d="M2.8 1.3l.75 1.95 1.95.75-1.95.75-.75 1.95-.75-1.95L.1 4l1.95-.75z" fill="#b3b6ba"/><circle cx="5.8" cy="1" r=".65" fill="#b3b6ba"/><circle cx="6" cy="6.1" r=".8" fill="#b3b6ba"/></svg>
<svg style="left:842px;top:251.6px" width="5.6" height="6.6" viewBox="0 0 5.6 6.6"><path d="M.2 1.2h5.2" stroke="#b3b6ba" stroke-width="1"/><path d="M1.8.4h2" stroke="#b3b6ba" stroke-width=".8"/><path d="M.7 1.9h4.2l-.45 4.5H1.15z" fill="#b3b6ba"/></svg>
<div class="a" style="left:13px;top:265px;width:915px;height:17px;background:#f2f2f2"></div>
<svg style="left:13.8px;top:268.8px" width="7.5" height="7" viewBox="0 0 7.5 7"><path d="M2.9 1.1H1.1v5.1h5.1V4.4" fill="none" stroke="#3d7fd9" stroke-width=".75"/><path d="M4.4.7h2.1v2.1M6.5.7L3.7 3.5" fill="none" stroke="#3d7fd9" stroke-width=".75"/></svg>
<div class="t" style="left:23.70px;top:271.00px;font-size:7.7px;color:#3d7fd9;letter-spacing:.35px;-webkit-text-stroke:.32px #3d7fd9">53122d9f</div>
<div class="t" style="left:159.70px;top:270.00px;font-size:7.7px;-webkit-text-stroke:.14px #1f2023;color:#1f2023;">Password Validation with Username Containing Special Characters</div>
<div class="a" style="left:485.1px;top:269.7px;width:29.2px;height:9.2px;border-radius:4.6px;background:#fdf0b8"></div>
<div class="t" style="left:487.90px;top:271.00px;font-size:7px;-webkit-text-stroke:.14px #e8804a;color:#e8804a;">manual</div>
<div class="a" style="left:607.3px;top:271.1px;width:4px;height:4px;border-radius:50%;background:#4fd19a"></div>
<div class="a" style="left:709.4px;top:270.1px;width:26.4px;height:8.8px;border-radius:4.4px;background:#efefef"></div>
<div class="t" style="left:711.60px;top:271.00px;font-size:7px;-webkit-text-stroke:.14px #333;color:#333;">normal</div>
<svg style="left:810.8px;top:269.2px" width="8" height="6" viewBox="0 0 8 6"><ellipse cx="3.9" cy="2.9" rx="3.75" ry="2.75" fill="#000"/><circle cx="3.9" cy="2.9" r="1.85" fill="#fff"/><circle cx="3.9" cy="2.9" r="1.05" fill="#555"/><circle cx="3.9" cy="2.9" r=".45" fill="#999"/></svg>
<svg style="left:824.3px;top:268.6px" width="7" height="7" viewBox="0 0 7 7"><path d="M5.1.8l1.1 1.1L2.2 5.9l-1.6.5.5-1.6z" fill="none" stroke="#c4c6c9" stroke-width=".85" stroke-linejoin="round"/><path d="M4.3 1.6l1.1 1.1" stroke="#c4c6c9" stroke-width=".7"/></svg>
<svg style="left:832.6px;top:268.4px" width="7" height="7" viewBox="0 0 7 7"><path d="M2.8 1.3l.75 1.95 1.95.75-1.95.75-.75 1.95-.75-1.95L.1 4l1.95-.75z" fill="#b3b6ba"/><circle cx="5.8" cy="1" r=".65" fill="#b3b6ba"/><circle cx="6" cy="6.1" r=".8" fill="#b3b6ba"/></svg>
<svg style="left:842px;top:268.6px" width="5.6" height="6.6" viewBox="0 0 5.6 6.6"><path d="M.2 1.2h5.2" stroke="#b3b6ba" stroke-width="1"/><path d="M1.8.4h2" stroke="#b3b6ba" stroke-width=".8"/><path d="M.7 1.9h4.2l-.45 4.5H1.15z" fill="#b3b6ba"/></svg>
<svg style="left:13.8px;top:285.8px" width="7.5" height="7" viewBox="0 0 7.5 7"><path d="M2.9 1.1H1.1v5.1h5.1V4.4" fill="none" stroke="#3d7fd9" stroke-width=".75"/><path d="M4.4.7h2.1v2.1M6.5.7L3.7 3.5" fill="none" stroke="#3d7fd9" stroke-width=".75"/></svg>
<div class="t" style="left:23.70px;top:288.00px;font-size:7.7px;color:#3d7fd9;letter-spacing:.35px;-webkit-text-stroke:.32px #3d7fd9">ee4d5089</div>
<div class="t" style="left:159.70px;top:287.00px;font-size:7.7px;-webkit-text-stroke:.14px #1f2023;color:#1f2023;">Test Password Expiration</div>
<div class="a" style="left:485.1px;top:286.7px;width:29.2px;height:9.2px;border-radius:4.6px;background:#fdf0b8"></div>
<div class="t" style="left:487.90px;top:288.00px;font-size:7px;-webkit-text-stroke:.14px #e8804a;color:#e8804a;">manual</div>
<div class="a" style="left:607.3px;top:288.1px;width:4px;height:4px;border-radius:50%;background:#4fd19a"></div>
<div class="a" style="left:709.4px;top:287.1px;width:26.4px;height:8.8px;border-radius:4.4px;background:#efefef"></div>
<div class="t" style="left:711.60px;top:288.00px;font-size:7px;-webkit-text-stroke:.14px #333;color:#333;">normal</div>
<svg style="left:810.8px;top:286.2px" width="8" height="6" viewBox="0 0 8 6"><ellipse cx="3.9" cy="2.9" rx="3.75" ry="2.75" fill="#000"/><circle cx="3.9" cy="2.9" r="1.85" fill="#fff"/><circle cx="3.9" cy="2.9" r="1.05" fill="#555"/><circle cx="3.9" cy="2.9" r=".45" fill="#999"/></svg>
<svg style="left:824.3px;top:285.6px" width="7" height="7" viewBox="0 0 7 7"><path d="M5.1.8l1.1 1.1L2.2 5.9l-1.6.5.5-1.6z" fill="none" stroke="#c4c6c9" stroke-width=".85" stroke-linejoin="round"/><path d="M4.3 1.6l1.1 1.1" stroke="#c4c6c9" stroke-width=".7"/></svg>
<svg style="left:832.6px;top:285.4px" width="7" height="7" viewBox="0 0 7 7"><path d="M2.8 1.3l.75 1.95 1.95.75-1.95.75-.75 1.95-.75-1.95L.1 4l1.95-.75z" fill="#b3b6ba"/><circle cx="5.8" cy="1" r=".65" fill="#b3b6ba"/><circle cx="6" cy="6.1" r=".8" fill="#b3b6ba"/></svg>
<svg style="left:842px;top:285.6px" width="5.6" height="6.6" viewBox="0 0 5.6 6.6"><path d="M.2 1.2h5.2" stroke="#b3b6ba" stroke-width="1"/><path d="M1.8.4h2" stroke="#b3b6ba" stroke-width=".8"/><path d="M.7 1.9h4.2l-.45 4.5H1.15z" fill="#b3b6ba"/></svg>
<svg style="left:13.8px;top:302.8px" width="7.5" height="7" viewBox="0 0 7.5 7"><path d="M2.9 1.1H1.1v5.1h5.1V4.4" fill="none" stroke="#3d7fd9" stroke-width=".75"/><path d="M4.4.7h2.1v2.1M6.5.7L3.7 3.5" fill="none" stroke="#3d7fd9" stroke-width=".75"/></svg>
<div class="t" style="left:23.70px;top:305.00px;font-size:7.7px;color:#3d7fd9;letter-spacing:.35px;-webkit-text-stroke:.32px #3d7fd9">021dbdb1</div>
<div class="t" style="left:159.70px;top:304.00px;font-size:7.7px;-webkit-text-stroke:.14px #1f2023;color:#1f2023;">Trim Leading and Trailing Spaces from Email Address</div>
<div class="a" style="left:485.1px;top:303.7px;width:29.2px;height:9.2px;border-radius:4.6px;background:#fdf0b8"></div>
<div class="t" style="left:487.90px;top:305.00px;font-size:7px;-webkit-text-stroke:.14px #e8804a;color:#e8804a;">manual</div>
<div class="a" style="left:607.3px;top:305.1px;width:4px;height:4px;border-radius:50%;background:#4fd19a"></div>
<div class="a" style="left:709.4px;top:304.1px;width:26.4px;height:8.8px;border-radius:4.4px;background:#efefef"></div>
<div class="t" style="left:711.60px;top:305.00px;font-size:7px;-webkit-text-stroke:.14px #333;color:#333;">normal</div>
<svg style="left:810.8px;top:303.2px" width="8" height="6" viewBox="0 0 8 6"><ellipse cx="3.9" cy="2.9" rx="3.75" ry="2.75" fill="#000"/><circle cx="3.9" cy="2.9" r="1.85" fill="#fff"/><circle cx="3.9" cy="2.9" r="1.05" fill="#555"/><circle cx="3.9" cy="2.9" r=".45" fill="#999"/></svg>
<svg style="left:824.3px;top:302.6px" width="7" height="7" viewBox="0 0 7 7"><path d="M5.1.8l1.1 1.1L2.2 5.9l-1.6.5.5-1.6z" fill="none" stroke="#c4c6c9" stroke-width=".85" stroke-linejoin="round"/><path d="M4.3 1.6l1.1 1.1" stroke="#c4c6c9" stroke-width=".7"/></svg>
<svg style="left:832.6px;top:302.4px" width="7" height="7" viewBox="0 0 7 7"><path d="M2.8 1.3l.75 1.95 1.95.75-1.95.75-.75 1.95-.75-1.95L.1 4l1.95-.75z" fill="#b3b6ba"/><circle cx="5.8" cy="1" r=".65" fill="#b3b6ba"/><circle cx="6" cy="6.1" r=".8" fill="#b3b6ba"/></svg>
<svg style="left:842px;top:302.6px" width="5.6" height="6.6" viewBox="0 0 5.6 6.6"><path d="M.2 1.2h5.2" stroke="#b3b6ba" stroke-width="1"/><path d="M1.8.4h2" stroke="#b3b6ba" stroke-width=".8"/><path d="M.7 1.9h4.2l-.45 4.5H1.15z" fill="#b3b6ba"/></svg>
<svg style="left:805.6px;top:268.3px" width="8" height="11" viewBox="0 0 8 11"><path d="M.6.6V9.8L2.9 7.5 4.6 10.9 5.8 10.4 4.1 7H6.9z" fill="#000" stroke="#fff" stroke-width=".7" stroke-linejoin="round"/></svg>
<div class="a" style="left:13px;top:316px;width:915px;height:1.5px;background:#e4e5e7"></div>
<svg style="left:442.3px;top:337px" width="5" height="6" viewBox="0 0 5 6"><path d="M4 .5L1.3 2.9 4 5.3" fill="none" stroke="#a3a8b0" stroke-width=".9"/></svg>
<div class="a" style="left:453.4px;top:330.1px;width:16.3px;height:19px;border-radius:2.5px;background:#e9f2fe"></div>
<div class="t" style="left:459.10px;top:336.00px;font-size:8.5px;-webkit-text-stroke:.14px #2f78e0;color:#2f78e0;">1</div>
<div class="t" style="left:476.30px;top:336.00px;font-size:8.5px;-webkit-text-stroke:.14px #2b3444;color:#2b3444;">2</div>
<svg style="left:493.6px;top:337px" width="5.5" height="6" viewBox="0 0 5.5 6"><path d="M1.3.5L4 2.9 1.3 5.3" fill="none" stroke="#2b3444" stroke-width="1.2"/></svg>
<div class="t" style="left:13.20px;top:364.00px;font-size:8.7px;font-weight:bold;color:#292a2e;">Activity</div>
<div class="a" style="left:13.5px;top:375.2px;width:163.2px;height:17.3px;border:1px solid #ebecef;border-radius:3px"></div>
<div class="a" style="left:37.5px;top:377.3px;width:52.1px;height:13.5px;border:1px solid #8fb9f5;border-radius:2px;background:#e9f2fe"></div>
<div class="t" style="left:20.70px;top:380.00px;font-size:7.9px;-webkit-text-stroke:.14px #505258;color:#505258;">All</div>
<div class="t" style="left:44.30px;top:380.00px;font-size:7.9px;-webkit-text-stroke:.14px #1868db;color:#1868db;">Comments</div>
<div class="t" style="left:97.00px;top:380.00px;font-size:7.9px;-webkit-text-stroke:.14px #505258;color:#505258;">History</div>
<div class="t" style="left:136.60px;top:380.00px;font-size:7.9px;-webkit-text-stroke:.14px #505258;color:#505258;">Work log</div>
<div class="a" style="left:13px;top:395px;width:919px;height:1px;background:#e8e9eb"></div>
<svg style="left:917.8px;top:382.8px" width="8.5" height="7.5" viewBox="0 0 8.5 7.5"><path d="M0 .6h8.2M0 3.4h3.8M0 6.2h3" stroke="#505258" stroke-width="1"/><path d="M6.3 2.6v4.3M4.9 5.3l1.4 1.5 1.4-1.5" fill="none" stroke="#505258" stroke-width="1"/></svg>
<div class="a" style="left:14.1px;top:406.9px;width:12.8px;height:12.8px;border-radius:50%;background:#1f845a"></div>
<div class="t" style="left:14.1px;top:410.6px;width:12.8px;text-align:center;font-size:5.2px;font-weight:bold;color:#fff;letter-spacing:-.1px">YB</div>
<div class="a" style="left:34.3px;top:405.2px;width:894px;height:60px;border:1px solid #d9dadd;border-radius:3px"></div>
<div class="t" style="left:45.20px;top:413.00px;font-size:7.9px;-webkit-text-stroke:.14px #6b6e76;color:#6b6e76;">Add a comment...</div>
<svg style="left:50px;top:433px" width="8.5" height="7.5" viewBox="0 0 8.5 7.5"><path d="M.4 7.2L2.2 1.8l3.6 3.6z" fill="#f2a93b"/><path d="M1.2 4.8l1.6 1.6M.8 6l.9.9" stroke="#e2553a" stroke-width=".7"/><circle cx="5.6" cy="1.2" r=".6" fill="#5ab0e8"/><circle cx="7.3" cy="3.4" r=".55" fill="#e2553a"/><path d="M4 .6l.7 1.4M6.5 5l1.4.4" stroke="#9b59d0" stroke-width=".7"/></svg>
<div class="t" style="left:59.90px;top:433.00px;font-size:8.0px;color:#292a2e;-webkit-text-stroke:.3px #292a2e">Looks good!</div>
<svg style="left:121.3px;top:433.3px" width="7.5" height="7.2" viewBox="0 0 7.5 7.2"><path d="M1.5 3.5C1 2.6 2 2 2.6 2.8L3.5 4 2.8 1.5c-.3-.9.8-1.2 1.1-.3l.8 2.2-.3-2c-.1-.9 1-.9 1.1 0l.6 3c.4 2-.6 3-2.2 3S1.9 5.5 1.5 3.5z" fill="#f5c33b"/><path d="M.6 5.2c.2.8.6 1.3 1.1 1.6" stroke="#e8a02a" stroke-width=".5" fill="none"/></svg>
<div class="t" style="left:130.50px;top:433.00px;font-size:8.0px;color:#292a2e;-webkit-text-stroke:.3px #292a2e">Need help?</div>
<svg style="left:188.3px;top:433.3px" width="7.2" height="7.2" viewBox="0 0 7.2 7.2"><circle cx="3.6" cy="3.6" r="3.5" fill="#e0352b"/><rect x="1.4" y="3" width="4.4" height="1.3" fill="#fff"/></svg>
<div class="t" style="left:198.00px;top:433.00px;font-size:8.0px;color:#292a2e;-webkit-text-stroke:.3px #292a2e">This is blocked...</div>
<svg style="left:275px;top:433.3px" width="7.6" height="7.4" viewBox="0 0 7.6 7.4"><circle cx="3" cy="3" r="2.2" fill="#dfe8ee" stroke="#7d8a93" stroke-width=".9"/><path d="M4.6 4.6l2.4 2.4" stroke="#4a4f55" stroke-width="1.4" stroke-linecap="round"/></svg>
<div class="t" style="left:284.70px;top:433.00px;font-size:8.0px;color:#292a2e;-webkit-text-stroke:.3px #292a2e">Can you clarify...?</div>
<svg style="left:365.6px;top:433.2px" width="7.4" height="7.4" viewBox="0 0 7.4 7.4"><rect x=".1" y=".1" width="7.2" height="7.2" rx="1.3" fill="#3bb54a"/><path d="M1.6 3.8l1.5 1.6 2.8-3.3" fill="none" stroke="#fff" stroke-width="1.1"/></svg>
<div class="t" style="left:375.50px;top:433.00px;font-size:8.0px;color:#292a2e;-webkit-text-stroke:.3px #292a2e">This is on track</div>
<div class="a" style="left:117px;top:451px;width:737px;height:2px;background:#f0f1f2"></div>
</body></html>
